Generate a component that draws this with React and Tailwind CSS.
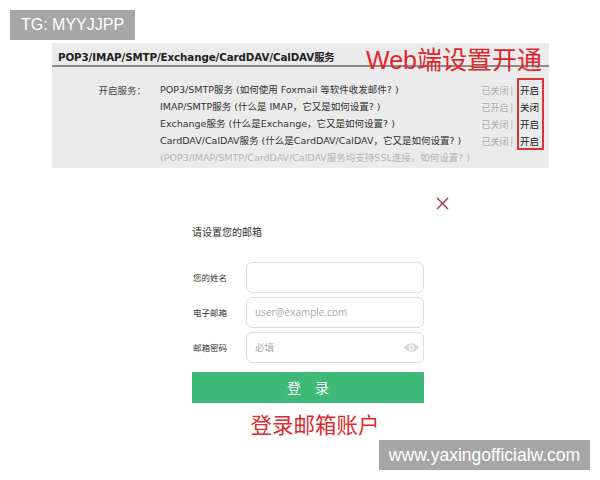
import React from "react";

const rows = [
  { t: "POP3/SMTP服务 (如何使用 Foxmail 等软件收发邮件? )", s: "已关闭", a: "开启" },
  { t: "IMAP/SMTP服务 (什么是 IMAP，它又是如何设置? )", s: "已开启", a: "关闭" },
  { t: "Exchange服务 (什么是Exchange，它又是如何设置? )", s: "已关闭", a: "开启" },
  { t: "CardDAV/CalDAV服务 (什么是CardDAV/CalDAV，它又是如何设置? )", s: "已关闭", a: "开启" },
];

export default function App() {
  const cjk = { fontFamily: '"Noto Sans CJK SC", "Noto Sans", sans-serif' };
  return (
    <div
      className="relative w-[600px] h-[480px] bg-white overflow-hidden"
      style={{ fontFamily: '"DejaVu Sans", "Noto Sans CJK SC", sans-serif' }}
    >
      {/* TG badge */}
      <div className="ml-[10px] pt-[10px]">
        <div
          className="w-[125px] h-[30px] bg-[#a6a6a6] text-white text-[16px] flex items-center justify-center"
          style={{ fontFamily: '"Liberation Sans", Arial, sans-serif' }}
        >
          TG: MYYJJPP
        </div>
      </div>

      {/* top panel */}
      <div className="relative ml-[52px] mt-[3px] w-[497px] h-[125px] bg-[#ebebeb]">
        <div className="h-[24px] border-b-2 border-[#8c8c8c] flex items-end pb-[3px] pl-[6px]">
          <span className="text-[10.3px] font-bold text-[#222] leading-none tracking-[-0.1px]">
            POP3/IMAP/SMTP/Exchange/CardDAV/CalDAV服务
          </span>
        </div>
        <div
          className="absolute left-[314px] top-[0px] text-[25px] leading-[30px] text-[#e0262b]"
          style={cjk}
        >
          <span style={{ fontFamily: '"Liberation Sans", "Noto Sans CJK SC", sans-serif' }}>Web</span>端设置开通
        </div>
        <div className="flex pt-[15px]">
          <div className="w-[108px] pr-[14px] text-right text-[9.5px] text-[#444] leading-[17px]" style={cjk}>
            开启服务：
          </div>
          <div className="flex-1">
            {rows.map((r, i) => (
              <div key={i} className="flex h-[17px] items-center">
                <div className="flex-1 text-[9.5px] text-[#333] whitespace-nowrap">
                  {r.t}
                </div>
                <div className="text-[9px] text-[#aaa] w-[40px] text-right pr-[4px]" style={cjk}>
                  {r.s} |
                </div>
                <div className="text-[9.5px] text-[#222] w-[24px] pl-[3px] mr-[8px]" style={cjk}>
                  {r.a}
                </div>
              </div>
            ))}
            <div className="h-[17px] flex items-center text-[9.5px] text-[#b5b5b5] whitespace-nowrap">
              (POP3/IMAP/SMTP/CardDAV/CalDAV服务均支持SSL连接。如何设置? )
            </div>
          </div>
        </div>
        <div className="absolute left-[465px] top-[35px] w-[27px] h-[72px] border-2 border-[#d8353b]" />
      </div>

      {/* popup */}
      <div className="ml-[192px] w-[258px] mt-[29px]" style={cjk}>
        <div className="flex justify-end pr-[1px]">
          <svg width="13" height="13" viewBox="0 0 13 13" className="text-[#a8304a]">
            <path d="M1 1 L12 12 M12 1 L1 12" stroke="currentColor" strokeWidth="1.4" fill="none" />
          </svg>
        </div>
        <div className="mt-[15px] text-[10px] text-[#333] leading-[14px]">请设置您的邮箱</div>
        <div className="mt-[23px] flex flex-col gap-[4px] w-[232px]">
          <div className="flex items-center h-[31px]">
            <div className="w-[54px] pl-[1px] text-[8.5px] text-[#333]">您的姓名</div>
            <div className="flex-1 h-[31px] border border-[#dcdcdc] rounded-[6px] bg-white" />
          </div>
          <div className="flex items-center h-[31px]">
            <div className="w-[54px] pl-[1px] text-[8.5px] text-[#333]">电子邮箱</div>
            <div className="flex-1 h-[31px] border border-[#dcdcdc] rounded-[6px] bg-white flex items-center pl-[8px] text-[10px] text-[#aaa]" style={{ fontFamily: '"Open Sans", "Noto Sans", sans-serif' }}>
              user@example.com
            </div>
          </div>
          <div className="flex items-center h-[31px]">
            <div className="w-[54px] pl-[1px] text-[8.5px] text-[#333]">邮箱密码</div>
            <div className="flex-1 h-[31px] border border-[#dcdcdc] rounded-[6px] bg-white flex items-center pl-[8px] pr-[3px] text-[9.5px] text-[#aaa]">
              <span className="flex-1">必填</span>
              <svg width="17" height="11" viewBox="0 0 16 10">
                <path d="M0.5 5 Q8 -3 15.5 5 Q8 13 0.5 5 Z" fill="#d9d9d9" />
                <circle cx="8" cy="5" r="2.6" fill="#fff" />
                <circle cx="8" cy="5" r="1.6" fill="#d9d9d9" />
              </svg>
            </div>
          </div>
        </div>
        <div className="mt-[9px] w-[232px] h-[31px] bg-[#3dba78] text-white text-[14px] flex items-center justify-center tracking-[14px] pl-[14px]">
          登录
        </div>
        <div className="mt-[7px] w-[232px] pl-[14px] text-center text-[21.5px] leading-[28px] text-[#dd2a2e]">
          登录邮箱账户
        </div>
      </div>

      {/* watermark */}
      <div
        className="absolute left-[379px] top-[440px] w-[211px] h-[30px] bg-[#a6a6a6] text-white text-[17.5px] flex items-center justify-center"
        style={{ fontFamily: '"Liberation Sans", Arial, sans-serif' }}
      >
        www.yaxingofficialw.com
      </div>
    </div>
  );
}
